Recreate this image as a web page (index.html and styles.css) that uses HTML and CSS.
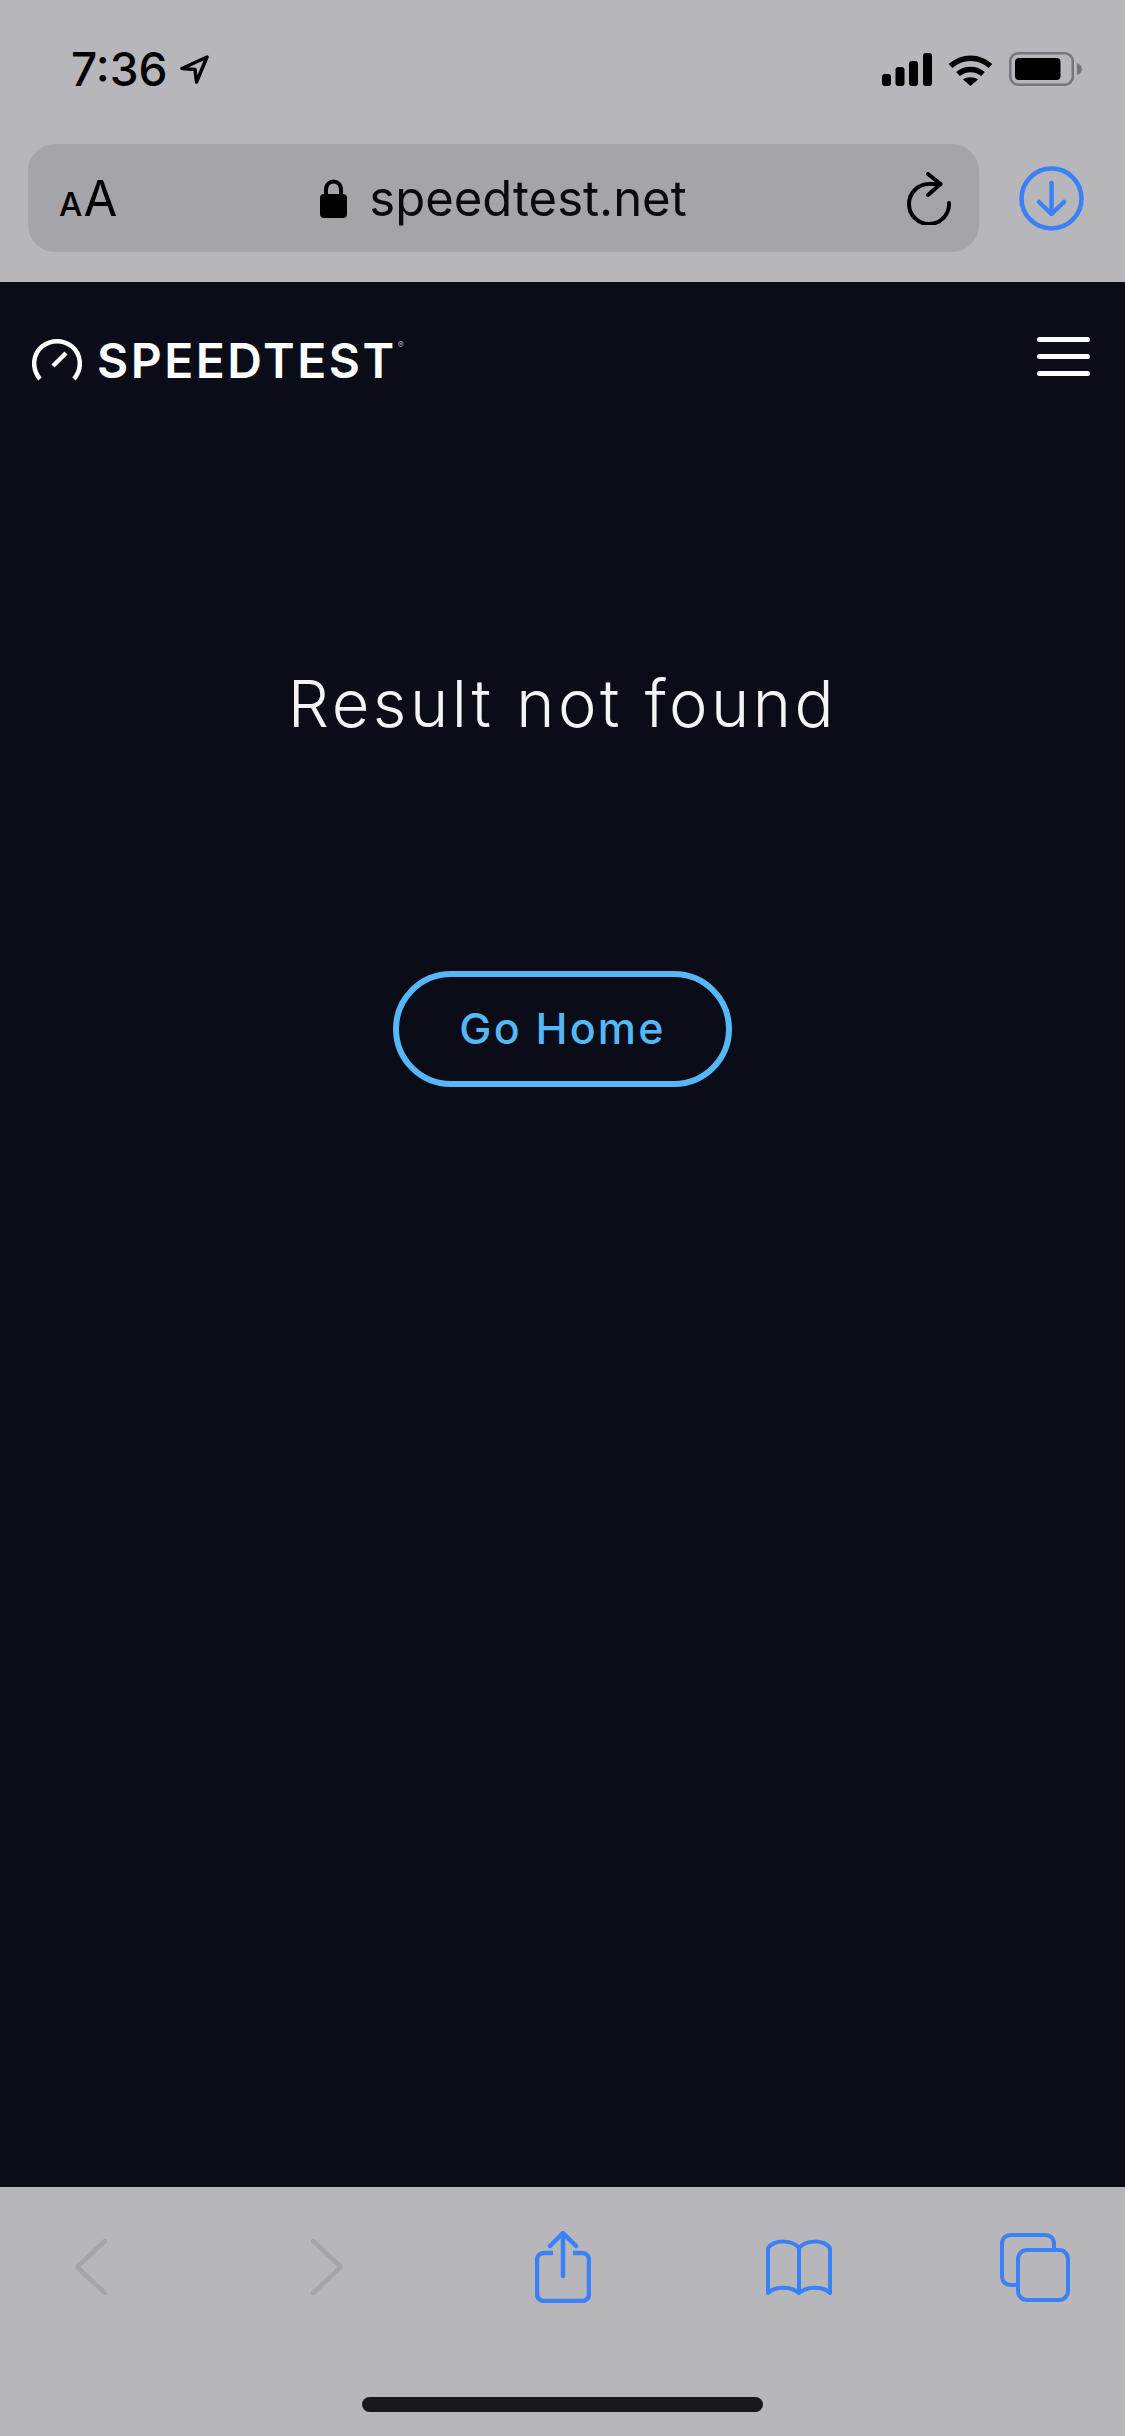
FILE: index.html
```html
<!DOCTYPE html>
<html lang="en">
<head>
    <meta charset="UTF-8">
    <title>Speedtest</title>
    <link rel="stylesheet" href="styles.css">
</head>
<body>
<div class="phone">
    <header class="chrome">
        <div class="status">
            <div class="clock">
                <span class="time">7:36</span>
                <svg class="loc" viewBox="0 0 29 29"><path d="M27 2 2 13.500 15 14.500 16.500 27Z" fill="none" stroke="#000" stroke-width="3.500" stroke-linejoin="round"/></svg>
            </div>
            <div class="status-icons">
                <svg class="signal" viewBox="0 0 50 33"><rect x="0" y="21" width="9" height="12" rx="3"/><rect x="13.500" y="14" width="9" height="19" rx="3"/><rect x="27" y="8" width="9" height="25" rx="3"/><rect x="41" y="0" width="9" height="33" rx="3"/></svg>
                <svg class="wifi" viewBox="0 0 45 33"><path d="M2.500 13C14 2.500 31 2.500 42.500 13" fill="none" stroke="#000" stroke-width="5.500"/><path d="M10 21C17 15 28 15 35 21" fill="none" stroke="#000" stroke-width="5.500"/><path d="M15 26.500C19 23.500 26 23.500 30 26.500L22.500 33Z"/></svg>
                <svg class="battery" viewBox="0 0 73 34"><rect x="1.250" y="1.250" width="62.500" height="31.500" rx="8" fill="none" stroke="#77767a" stroke-width="2.500"/><rect x="6" y="6" width="45.500" height="22" rx="4"/><path d="M68 11C71 12 73 14.500 73 17C73 19.500 71 22 68 23Z" fill="#77767a"/></svg>
            </div>
        </div>
        <div class="addr-row">
            <div class="addr">
                <div class="aa"><span class="aa-small">A</span><span class="aa-big">A</span></div>
                <div class="host">
                    <svg class="lock" viewBox="0 0 27 39"><path d="M6 16V11C6 -0.500 21 -0.500 21 11V16" fill="none" stroke="#000" stroke-width="4"/><rect x="0" y="15" width="27" height="24" rx="4"/></svg>
                    <span>speedtest.net</span>
                </div>
                <svg class="reload" viewBox="0 0 44 53"><path d="M33 12H22A20 20 0 1 0 42 31" fill="none" stroke="#000" stroke-width="4" stroke-linecap="round"/><path d="M21 2 33.500 12 21 23" fill="none" stroke="#000" stroke-width="4" stroke-linecap="round" stroke-linejoin="round"/></svg>
            </div>
            <svg class="download" viewBox="0 0 65 65"><circle cx="32.500" cy="32.500" r="30" fill="none" stroke="#3a80f6" stroke-width="4.500"/><path d="M32.500 17V48M20 36 32.500 48 45 36" fill="none" stroke="#3a80f6" stroke-width="4.500" stroke-linecap="round" stroke-linejoin="round"/></svg>
        </div>
    </header>

    <main class="site">
        <nav class="site-nav">
            <a class="brand">
                <svg class="gauge" viewBox="0 0 50 43"><path d="M8 40C-1 29 1 15 10 7.500C19 0.500 31 0.500 40 7.500C49 15 51 29 42 40" fill="none" stroke="#fff" stroke-width="4.500"/><path d="M21 27 34 14" fill="none" stroke="#fff" stroke-width="4.500"/></svg>
                <span class="brand-name">SPEEDTEST</span><span class="brand-reg">®</span>
            </a>
            <div class="burger"><span></span><span></span><span></span></div>
        </nav>
        <h1 class="title">Result not found</h1>
        <a class="home-btn">Go Home</a>
    </main>

    <footer class="toolbar">
        <div class="tools">
            <div class="tool"><svg class="back" viewBox="0 0 32 56"><path d="M30 2 2 28 30 54" fill="none" stroke="#a5a5a8" stroke-width="4.500" stroke-linecap="round" stroke-linejoin="round"/></svg></div>
            <div class="tool"><svg class="forward" viewBox="0 0 32 56"><path d="M2 2 30 28 2 54" fill="none" stroke="#a5a5a8" stroke-width="4.500" stroke-linecap="round" stroke-linejoin="round"/></svg></div>
            <div class="tool"><svg class="share" viewBox="0 0 56 72"><path d="M18 22H9C5 22 2 25 2 29V63C2 67 5 70 9 70H47C51 70 54 67 54 63V29C54 25 51 22 47 22H38" fill="none" stroke="#3a80f6" stroke-width="4.500"/><path d="M28 3V45M15 15 28 2 41 15" fill="none" stroke="#3a80f6" stroke-width="4.500" stroke-linecap="round" stroke-linejoin="round"/></svg></div>
            <div class="tool"><svg class="book" viewBox="0 0 66 57"><path d="M33 9C27 1 9 0 2 9V54C9 47 25 47 33 54C41 47 57 47 64 54V9C57 0 39 1 33 9V53" fill="none" stroke="#3a80f6" stroke-width="4" stroke-linejoin="round"/></svg></div>
            <div class="tool"><svg class="tabs" viewBox="0 0 70 69"><path d="M54 17V11C54 5.500 50.500 2 45 2H11C5.500 2 2 5.500 2 11V43C2 48.500 5.500 52 11 52H17" fill="none" stroke="#3a80f6" stroke-width="4"/><rect x="18" y="17" width="50" height="50" rx="9" fill="none" stroke="#3a80f6" stroke-width="4"/></svg></div>
        </div>
        <div class="home-bar"></div>
    </footer>
</div>
</body>
</html>
```

FILE: styles.css
```css
* {
    margin: 0;
    padding: 0;
    box-sizing: border-box;
}

body {
    background: #0a0c18;
    font-family: Inter, "Liberation Sans", sans-serif;
}

svg {
    display: block;
    flex: none;
}

.phone {
    display: flex;
    flex-direction: column;
    width: 1125px;
    height: 2436px;
    overflow: hidden;
}

/* safari top */
.chrome {
    height: 282px;
    padding-top: 52px;
    background: #b7b6bb;
}

.status {
    display: flex;
    justify-content: space-between;
    align-items: center;
    height: 34px;
    padding: 0 43px 0 71px;
}

.clock {
    display: flex;
    align-items: center;
}

.time {
    font-size: 46px;
    font-weight: 500;
    line-height: 34px;
    color: #000;
}

.loc {
    width: 29px;
    height: 29px;
    margin-left: 12px;
}

.status-icons {
    display: flex;
    align-items: center;
    gap: 16px;
}

.signal {
    width: 50px;
    height: 33px;
}

.wifi {
    width: 45px;
    height: 33px;
}

.battery {
    width: 73px;
    height: 34px;
}

.addr-row {
    display: flex;
    align-items: center;
    margin-top: 58px;
    padding-left: 28px;
}

.addr {
    display: flex;
    align-items: center;
    width: 951px;
    height: 108px;
    padding: 0 28px 0 31px;
    border-radius: 27px;
    background: #a5a4a9;
}

.aa {
    display: flex;
    align-items: baseline;
    width: 57px;
    color: #000;
}

.aa-small {
    margin-right: 1px;
    font-size: 33px;
    font-weight: 500;
}

.aa-big {
    font-size: 49px;
    font-weight: 400;
}

.host {
    display: flex;
    flex: 1;
    align-items: center;
    justify-content: center;
    padding-right: 16px;
    font-size: 49px;
    color: #0b0b0c;
}

.lock {
    width: 27px;
    height: 39px;
    margin-right: 22px;
}

.reload {
    width: 44px;
    height: 53px;
}

.download {
    width: 65px;
    height: 65px;
    margin-left: 40px;
}

/* page */
.site {
    display: flex;
    flex: 1;
    flex-direction: column;
    align-items: center;
    background: #0a0c18;
    color: #fff;
}

.site-nav {
    display: flex;
    justify-content: space-between;
    align-items: center;
    width: 100%;
    height: 156px;
    padding: 0 35px 0 32px;
}

.brand {
    display: flex;
    align-items: center;
}

.gauge {
    width: 50px;
    height: 43px;
    margin-right: 15px;
}

.brand-name {
    font-size: 48px;
    font-weight: 600;
    letter-spacing: 2.500px;
}

.brand-reg {
    align-self: flex-start;
    margin: 8px 0 0 1px;
    font-size: 9px;
    color: #aaa;
}

.burger {
    display: flex;
    flex-direction: column;
    gap: 12px;
    width: 53px;
    margin-bottom: 7px;
}

.burger span {
    height: 5px;
    border-radius: 3px;
    background: #fff;
}

.title {
    margin-top: 226px;
    font-size: 65px;
    font-weight: 300;
    letter-spacing: 3.500px;
    color: #f4f4f6;
}

.home-btn {
    display: flex;
    align-items: center;
    justify-content: center;
    width: 339px;
    height: 116px;
    margin-top: 228px;
    padding-bottom: 3px;
    border: 6px solid #54b8f8;
    border-radius: 58px;
    font-size: 43px;
    font-weight: 500;
    letter-spacing: 2.200px;
    color: #54b8f8;
}

/* safari bottom */
.toolbar {
    height: 249px;
    background: #b7b6bb;
}

.tools {
    display: flex;
    justify-content: space-between;
    align-items: center;
    height: 160px;
    padding: 0 35px 0 36px;
}

.tool {
    display: flex;
    justify-content: center;
    width: 110px;
}

.back,
.forward {
    width: 32px;
    height: 56px;
}

.share {
    width: 56px;
    height: 72px;
}

.book {
    width: 66px;
    height: 57px;
}

.tabs {
    width: 70px;
    height: 69px;
}

.home-bar {
    width: 401px;
    height: 15px;
    margin: 50px auto 0;
    border-radius: 8px;
    background: #18181a;
}
```
